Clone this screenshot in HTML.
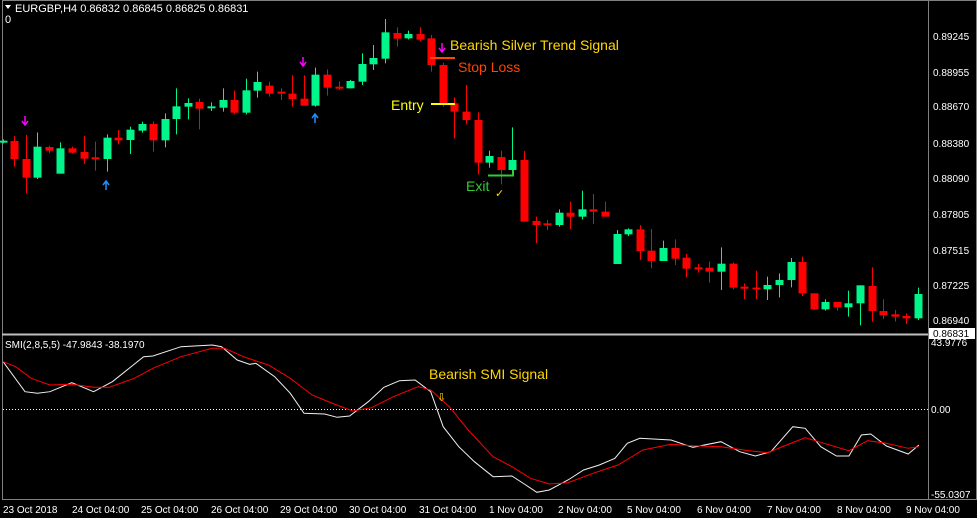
<!DOCTYPE html>
<html><head><meta charset="utf-8"><style>
html,body{margin:0;padding:0;background:#000;}
body{width:977px;height:518px;overflow:hidden;position:relative;font-family:"Liberation Sans",sans-serif;}
svg{position:absolute;left:0;top:0;}
</style></head><body>
<svg id="s" width="977" height="518" xmlns="http://www.w3.org/2000/svg">
<rect x="0" y="0" width="977" height="518" fill="#000"/>
<rect x="2.5" y="0.5" width="974" height="499" fill="none" stroke="#808080"/>
<line x1="928.5" y1="0" x2="928.5" y2="500" stroke="#808080"/>
<line x1="2" y1="334.5" x2="928" y2="334.5" stroke="#c0c0c0" stroke-width="2"/>
<line x1="3" y1="409.5" x2="928" y2="409.5" stroke="#fff" stroke-dasharray="1,2"/>
<g id="c"></g>
<polyline id="wl" fill="none" stroke="#f0f0f0" stroke-width="1"/>
<polyline id="rl" fill="none" stroke="#ff0000" stroke-width="1"/>
<g font-size="11" fill="#fff">
<polygon points="5,5 11,5 8,9" fill="#fff"/>
<text x="15" y="12">EURGBP,H4  0.86832 0.86845 0.86825 0.86831</text>
<text x="5" y="23">0</text>
<text x="5" y="348" font-size="10">SMI(2,8,5,5) -47.9843 -38.1970</text>
</g>
<g font-size="10" fill="#fff">
<text x="933" y="40">0.89245</text>
<text x="933" y="76">0.88955</text>
<text x="933" y="110">0.88670</text>
<text x="933" y="147">0.88380</text>
<text x="933" y="182">0.88090</text>
<text x="933" y="218">0.87805</text>
<text x="933" y="254">0.87515</text>
<text x="933" y="289">0.87225</text>
<text x="933" y="324">0.86940</text>
<rect x="929" y="328" width="46" height="11" fill="#fff"/>
<text x="933" y="337" fill="#000">0.86831</text>
<text x="931" y="346">43.9776</text>
<text x="931" y="413">0.00</text>
<text x="931" y="498">-55.0307</text>
</g>
<g font-size="10" fill="#fff">
<text x="3" y="513">23 Oct 2018</text>
<text x="72" y="513">24 Oct 04:00</text>
<text x="141" y="513">25 Oct 04:00</text>
<text x="211" y="513">26 Oct 04:00</text>
<text x="280" y="513">29 Oct 04:00</text>
<text x="349" y="513">30 Oct 04:00</text>
<text x="419" y="513">31 Oct 04:00</text>
<text x="489" y="513">1 Nov 04:00</text>
<text x="558" y="513">2 Nov 04:00</text>
<text x="627" y="513">5 Nov 04:00</text>
<text x="697" y="513">6 Nov 04:00</text>
<text x="767" y="513">7 Nov 04:00</text>
<text x="837" y="513">8 Nov 04:00</text>
<text x="906" y="513">9 Nov 04:00</text>
</g>
<line x1="430" y1="58" x2="455" y2="58" stroke="#ff4500" stroke-width="2"/>
<line x1="431" y1="104" x2="455" y2="104" stroke="#ffff00" stroke-width="2"/>
<polyline points="488,175.5 513,175.5 513,170" fill="none" stroke="#32cd32" stroke-width="2"/>
<g font-size="14">
<text x="450" y="50" fill="#ffd700">Bearish Silver Trend Signal</text>
<text x="458" y="72" fill="#ff4500">Stop Loss</text>
<text x="391" y="110" fill="#ffff00">Entry</text>
<text x="466" y="191" fill="#32cd32">Exit</text>
<text x="429" y="379" fill="#ffd700">Bearish SMI Signal</text>
</g>
<text x="495" y="197" font-size="11" fill="#ffd700">✓</text>
<text x="437" y="401" font-size="11" fill="#ffd700">⇩</text>
<g id="ar"></g>
</svg>
<script>
var G="#00f58a",R="#ff0000";
var z1=[[8,425,425,418,430,G],[42,423,477,408,500,R],[77,477,533,405,580,R],[111,440,533,397,537,G],[147,441,452,437,460,R],[181,445,521,427,521,G],[216,445,458,440,460,R],[251,456,476,408,492,R],[286,475,475,425,512,R],[320,413,477,403,515,G],[355,413,421,390,433,R],[390,389,420,380,462,G],[425,372,392,365,398,G],[459,372,421,365,455,R],[494,357,421,340,442,G],[529,319,357,265,403,G],[564,309,320,295,358,G],[598,306,326,296,388,R],[633,322,322,307,333,G],[668,300,323,265,335,G],[703,300,338,272,343,R],[738,271,338,236,343,G],[772,246,272,215,293,G],[807,257,281,245,290,R],[842,278,278,265,300,R],[876,281,297,226,320,R],[911,296,317,226,317,R],[946,224,317,203,320,G],[981,224,263,208,287,R],[1016,263,263,245,270,R],[1050,243,265,240,265,G],[1085,192,245,160,255,G],[1120,174,193,135,210,G],[1155,97,176,57,190,G],[1190,99,116,82,140,R],[1224,102,115,92,118,G],[1259,102,119,82,124,R]];
var z2=[[33,55,135,45,155,R],[68,135,250,128,260,R],[103,250,275,232,355,R],[138,275,300,195,313,R],[173,300,428,277,463,R],[208,408,428,392,443,G],[243,411,450,392,493,R],[277,420,450,322,467,G],[312,420,605,393,605,R],[347,603,615,590,670,R],[381,613,613,600,630,R],[416,578,615,568,620,G],[451,578,590,545,627,R],[486,568,590,512,598,G],[520,568,575,522,612,R],[555,575,590,545,590,R],[590,642,732,630,732,G],[625,628,643,625,648,G],[659,628,693,615,720,R],[694,692,723,627,745,R],[729,684,723,662,723,G],[764,684,716,658,735,R],[798,713,746,702,772,R],[833,745,745,732,758,R],[868,743,755,725,788,R],[903,731,755,682,810,G],[938,731,803,728,808,R],[972,803,803,790,838,R],[1007,803,808,752,838,R],[1042,795,808,770,840,G],[1077,780,795,760,832,G],[1112,726,780,714,802,G],[1146,726,820,710,828,R],[1181,820,868,820,870,R],[1216,846,868,838,872,G],[1250,846,862,846,872,R],[1285,850,862,812,890,G],[1320,796,850,796,916,G],[1355,798,873,742,905,R],[1390,873,886,838,897,R],[1424,883,890,870,905,R],[1459,888,895,880,912,R],[1494,822,895,803,900,G]];
var ns="http://www.w3.org/2000/svg",c=document.getElementById("c"),h="";
function add(x,t,b,wt,wb,col){
 h+='<line x1="'+x+'" y1="'+wt+'" x2="'+x+'" y2="'+wb+'" stroke="'+col+'" stroke-width="1"/>';
 var hh=b-t; if(hh<1.5){h+='<line x1="'+(x-4)+'" y1="'+t+'" x2="'+(x+4)+'" y2="'+t+'" stroke="'+col+'" stroke-width="2"/>';}
 else h+='<rect x="'+(x-4)+'" y="'+t+'" width="8" height="'+hh+'" fill="'+col+'"/>';
}
z1.forEach(function(d){add(Math.round(d[0]/3)+.5,d[1]/3,d[2]/3,d[3]/3,d[4]/3,d[5]);});
z2.forEach(function(d){add(Math.round(420+d[0]/3)+.5,20+d[1]/3,20+d[2]/3,20+d[3]/3,20+d[4]/3,d[5]);});
c.innerHTML=h;
var a="";
[[25,121],[303,62],[442,48]].forEach(function(p){a+='<path d="M'+p[0]+' '+(p[1]-5)+'V'+(p[1]+3)+'M'+(p[0]-3)+' '+p[1]+'L'+p[0]+' '+(p[1]+4)+'L'+(p[0]+3)+' '+p[1]+'" stroke="#ff00ff" stroke-width="1.5" fill="none"/>';});
[[106,185],[315,118]].forEach(function(p){a+='<path d="M'+p[0]+' '+(p[1]+5)+'V'+(p[1]-3)+'M'+(p[0]-3)+' '+p[1]+'L'+p[0]+' '+(p[1]-4)+'L'+(p[0]+3)+' '+p[1]+'" stroke="#1e90ff" stroke-width="1.5" fill="none"/>';});
document.getElementById("ar").innerHTML=a;
var W=[[5,95],[40,185],[60,190],[80,185],[115,158],[150,185],[180,155],[230,80],[245,78],[290,50],[340,45],[355,50],[380,90],[400,103],[410,100],[440,140],[465,190],[487,250],[520,252],[540,262],[560,258],[590,215],[615,172],[640,152],[665,150],[690,185],[710,290],[735,350],[760,395],[790,440],[820,438],[840,462],[860,487],[880,480],[910,450],[935,420],[960,405],[985,385],[1005,340],[1025,325],[1075,330],[1110,352],[1155,335],[1185,365],[1210,378],[1235,365],[1270,290],[1290,295],[1315,350],[1340,378],[1360,378],[1380,315],[1395,312],[1420,348],[1455,372],[1472,345]];
var Rd=[[5,95],[25,110],[50,145],[80,165],[115,163],[150,172],[175,172],[215,145],[245,115],[290,80],[340,55],[360,55],[390,80],[430,105],[465,145],[500,195],[535,222],[565,243],[595,233],[630,200],[670,170],[690,180],[720,230],[750,300],[790,380],[820,410],[850,445],[880,462],[910,458],[950,430],[990,405],[1030,360],[1075,343],[1110,347],[1155,350],[1200,362],[1230,368],[1260,345],[1290,323],[1320,340],[1360,362],[1390,332],[1420,340],[1455,355],[1472,350]];
function pts(A){return A.map(function(p){return (p[0]/1.602).toFixed(1)+","+(330+p[1]/3).toFixed(1);}).join(" ");}
document.getElementById("wl").setAttribute("points",pts(W));
document.getElementById("rl").setAttribute("points",pts(Rd));
</script>
</body></html>
